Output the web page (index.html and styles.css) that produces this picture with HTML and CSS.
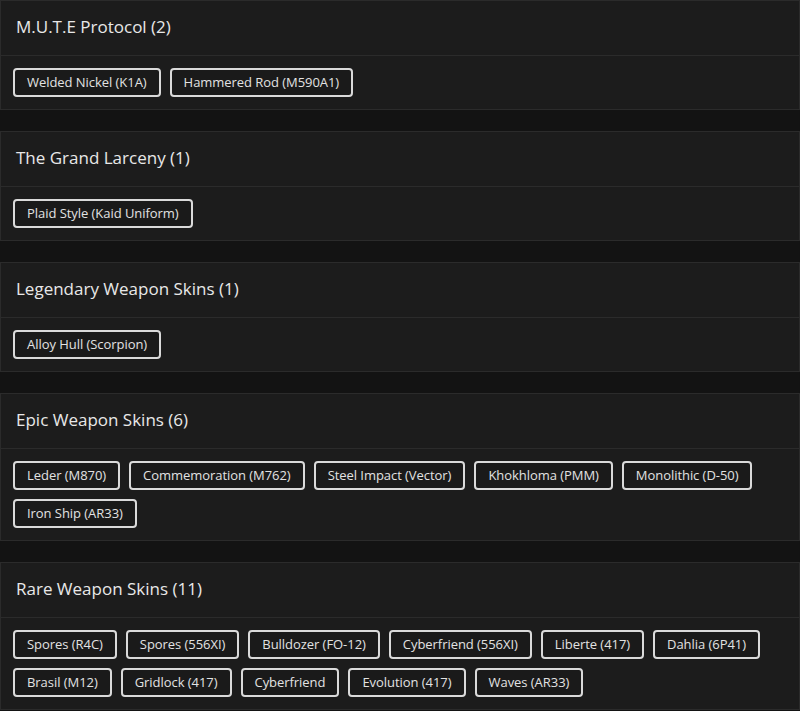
FILE: index.html
```html
<!DOCTYPE html>
<html>
<head>
<meta charset="utf-8">
<link rel="stylesheet" href="styles.css">
</head>
<body>
<div class="list">
  <section class="card">
    <h2 class="card-title">M.U.T.E Protocol (2)</h2>
    <div class="chips">
      <span class="chip">Welded Nickel (K1A)</span>
      <span class="chip">Hammered Rod (M590A1)</span>
    </div>
  </section>
  <section class="card">
    <h2 class="card-title">The Grand Larceny (1)</h2>
    <div class="chips">
      <span class="chip">Plaid Style (Kaid Uniform)</span>
    </div>
  </section>
  <section class="card">
    <h2 class="card-title">Legendary Weapon Skins (1)</h2>
    <div class="chips">
      <span class="chip">Alloy Hull (Scorpion)</span>
    </div>
  </section>
  <section class="card">
    <h2 class="card-title">Epic Weapon Skins (6)</h2>
    <div class="chips">
      <span class="chip">Leder (M870)</span>
      <span class="chip">Commemoration (M762)</span>
      <span class="chip">Steel Impact (Vector)</span>
      <span class="chip">Khokhloma (PMM)</span>
      <span class="chip">Monolithic (D-50)</span>
      <span class="chip">Iron Ship (AR33)</span>
    </div>
  </section>
  <section class="card">
    <h2 class="card-title">Rare Weapon Skins (11)</h2>
    <div class="chips">
      <span class="chip">Spores (R4C)</span>
      <span class="chip">Spores (556XI)</span>
      <span class="chip">Bulldozer (FO-12)</span>
      <span class="chip">Cyberfriend (556XI)</span>
      <span class="chip">Liberte (417)</span>
      <span class="chip">Dahlia (6P41)</span>
      <span class="chip">Brasil (M12)</span>
      <span class="chip">Gridlock (417)</span>
      <span class="chip">Cyberfriend</span>
      <span class="chip">Evolution (417)</span>
      <span class="chip">Waves (AR33)</span>
    </div>
  </section>
</div>
</body>
</html>
```
FILE: styles.css
```css
html, body {
  margin: 0;
  padding: 0;
  background: #131313;
}
body {
  font-family: "Open Sans", "DejaVu Sans", sans-serif;
  color: #e4e4e4;
}
.list {
  display: flex;
  flex-direction: column;
  gap: 21px;
}
.card {
  background: #1c1c1c;
  border: 1px solid #2b2b2b;
}
.card-title {
  margin: 0;
  height: 55px;
  box-sizing: border-box;
  padding: 0 15px 3px;
  display: flex;
  align-items: center;
  font-size: 17px;
  font-weight: 500;
  color: #e8e8e8;
  border-bottom: 1px solid #2b2b2b;
}
.chips {
  display: flex;
  flex-wrap: wrap;
  gap: 9px;
  padding: 12px 12px 12px;
}
.chip {
  height: 29px;
  box-sizing: border-box;
  display: inline-flex;
  align-items: center;
  padding: 0 12px 1px;
  border: 2px solid #dadada;
  border-radius: 4px;
  font-size: 13px;
  letter-spacing: -0.05px;
  color: #e2e2e2;
  background: #1a1a1a;
}
```
